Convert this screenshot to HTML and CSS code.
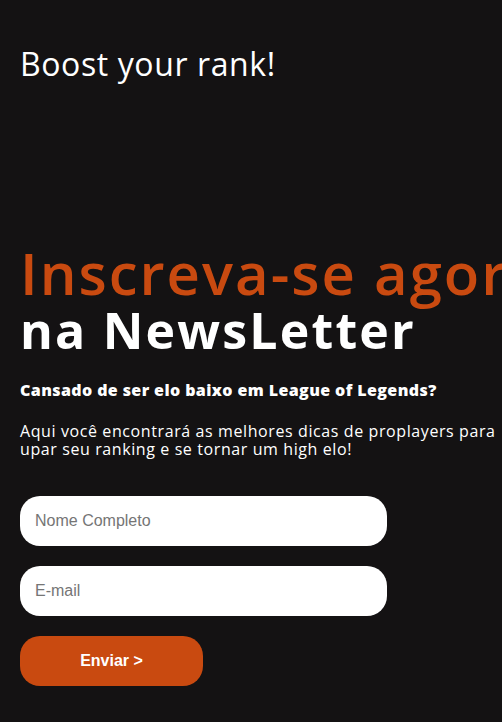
FILE: index.html
```html
<!DOCTYPE html>
<html lang="pt-BR">
<head>
<meta charset="utf-8">
<title>Boost your rank!</title>
<link rel="stylesheet" href="styles.css">
</head>
<body>
<header class="header">
  <h1 class="brand">Boost your rank!</h1>
</header>
<main class="newsletter">
  <h2 class="title"><span class="title-accent">Inscreva-se agora</span><span class="title-main">na NewsLetter</span></h2>
  <p class="lead">Cansado de ser elo baixo em League of Legends?</p>
  <p class="desc">Aqui você encontrará as melhores dicas de proplayers para upar seu ranking e se tornar um high elo!</p>
  <form class="form">
    <input class="field" type="text" placeholder="Nome Completo">
    <input class="field" type="email" placeholder="E-mail">
    <button class="submit" type="button">Enviar &gt;</button>
  </form>
</main>
</body>
</html>
```

FILE: styles.css
```css
html, body {
  margin: 0;
  padding: 0;
  background: #141213;
  color: #ffffff;
  font-family: "Open Sans", "DejaVu Sans", sans-serif;
  overflow: hidden;
}

.header {
  padding: 40px 20px 0;
  height: 200px;
  box-sizing: border-box;
}

.brand {
  margin: 0;
  font-weight: 400;
  font-size: 32px;
  line-height: 48px;
  letter-spacing: 0.6px;
}

.newsletter {
  padding: 0 20px;
}

.title {
  margin: 43px 0 0;
  font-weight: 700;
  white-space: nowrap;
}

.title-accent {
  display: block;
  color: #c94a10;
  font-size: 58px;
  line-height: 60px;
  font-weight: 600;
  letter-spacing: 2px;
}

.title-main {
  display: block;
  color: #ffffff;
  font-size: 50px;
  line-height: 55px;
  letter-spacing: 2.2px;
}

.lead {
  margin: 22px 0 0;
  font-size: 16px;
  font-weight: 800;
  line-height: 20px;
  letter-spacing: 0.4px;
}

.desc {
  margin: 22px 0 0;
  font-size: 16px;
  line-height: 18px;
  letter-spacing: 0.6px;
  width: 490px;
}

.form {
  display: flex;
  flex-direction: column;
  align-items: flex-start;
  gap: 20px;
  margin-top: 38px;
}

.field {
  box-sizing: border-box;
  width: 367px;
  height: 50px;
  border: none;
  border-radius: 20px;
  background: #ffffff;
  padding: 0 15px;
  font-family: "Liberation Sans", Arial, sans-serif;
  font-size: 16px;
  color: #333;
  outline: none;
}

.field::placeholder {
  color: #757575;
}

.submit {
  width: 183px;
  height: 50px;
  border: none;
  border-radius: 20px;
  background: #c94a10;
  color: #ffffff;
  font-family: "Liberation Sans", Arial, sans-serif;
  font-size: 16px;
  font-weight: 700;
  cursor: pointer;
}
```
